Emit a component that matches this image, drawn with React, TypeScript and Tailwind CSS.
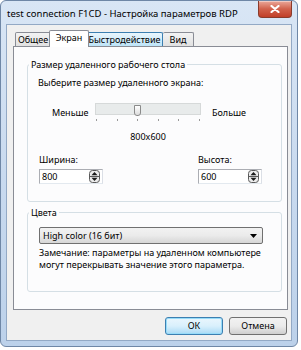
function Spinner() {
  return (
    <svg width="11" height="13" viewBox="0 0 11 13" className="shrink-0">
      <rect x="0.5" y="0.5" width="10" height="12" rx="3" fill="#ececec" stroke="#5a5a5a" />
      <path d="M5.5 2 L8.5 5.2 H2.5 Z" fill="#1a1a1a" />
      <line x1="1" y1="6.5" x2="10" y2="6.5" stroke="#5a5a5a" />
      <path d="M2.5 7.8 H8.5 L5.5 11 Z" fill="#1a1a1a" />
    </svg>
  );
}

function NumberBox({ value }: { value: string }) {
  return (
    <div className="mt-[3px] w-[64px] h-[15px] bg-white border border-[#abadb3] border-b-[#e3e9ef] border-r-[#dbdfe6] flex items-center pl-[2px] pr-[2px]">
      <span className="flex-1 leading-[13px]">{value}</span>
      <Spinner />
    </div>
  );
}

export default function App() {
  const ticks = [0, 1, 2, 3, 4, 5];
  return (
    <div className="w-[301px] h-[350px] bg-white text-black text-[9px] font-['Noto_Sans','Open_Sans',sans-serif]">
      <div className="w-[298px] h-[347px] rounded-[6px] border border-[#6f87a6] bg-gradient-to-b from-[#d9e6f5] via-[#c9daef] to-[#bcd1ea] flex flex-col">
        {/* Title bar */}
        <div className="h-[23px] flex items-start shrink-0">
          <span className="pl-[6px] pt-[6px] text-[9.5px] leading-[13px] text-black">
            test connection F1CD - Настройка параметров RDP
          </span>
          <div className="ml-auto mr-[5px] w-[34px] h-[17px] rounded-b-[4px] border border-t-0 border-[#8a3b2b] bg-gradient-to-b from-[#eaa89a] via-[#d1614b] to-[#c13e27] flex items-center justify-center shadow-[inset_0_1px_0_rgba(255,255,255,0.4)]">
            <svg width="10" height="8" viewBox="0 0 10 8">
              <path d="M1.5 1 L8.5 7 M8.5 1 L1.5 7" stroke="#ffffff" strokeWidth="2.2" strokeLinecap="round" />
            </svg>
          </div>
        </div>

        {/* Client area */}
        <div className="mx-[5px] mb-[5px] flex-1 border border-[#93a9c5] bg-[#f0f0f0] flex flex-col pl-[6px] pr-[3px] pt-[5px]">
          {/* Tabs */}
          <div className="h-[16px] flex items-end pl-[2px]">
            <div className="w-[36px] h-[14px] border border-b-0 border-[#898c95] bg-gradient-to-b from-[#f3f3f3] to-[#e1e1e1] rounded-t-[2px] flex items-center justify-center leading-[12px]">
              Общее
            </div>
            <div className="relative z-10 -mx-[2px] -mb-px w-[40px] h-[17px] border border-b-0 border-[#898c95] bg-white rounded-t-[2px] flex items-start justify-center pt-[1px] leading-[12px]">
              Экран
            </div>
            <div className="w-[76px] h-[14px] border border-b-0 border-l-0 border-[#3c7fb1] bg-gradient-to-b from-[#eaf6fd] to-[#bde4f8] rounded-t-[2px] flex items-center justify-center leading-[12px]">
              Быстродействие
            </div>
            <div className="w-[31px] h-[14px] border border-b-0 border-l-0 border-[#898c95] bg-gradient-to-b from-[#f3f3f3] to-[#e1e1e1] rounded-t-[2px] flex items-center justify-center leading-[12px]">
              Вид
            </div>
          </div>

          {/* Panel */}
          <div className="w-[275px] h-[264px] border border-[#898c95] bg-[#fcfcfd] pl-[13px] pr-[5px] pt-[11px] flex flex-col">
            {/* Group 1 */}
            <fieldset className="h-[144px] border border-[#d5dfe5] rounded-[3px] flex flex-col">
              <legend className="ml-[1px] px-[2px] leading-[13px]">Размер удаленного рабочего стола</legend>
              <div className="pl-[10px] mt-[5px] leading-[13px]">Выберите размер удаленного экрана:</div>

              <div className="mt-[14px] pl-[24px] flex items-center">
                <span className="w-[43px] leading-[13px]">Меньше</span>
                <div className="w-[106px] flex flex-col">
                  <div className="relative h-[12px] border border-[#d6d9d9] bg-[#e8ebeb]">
                    <div className="absolute left-[38px] top-[1px] w-[7px] h-[11px] rounded-b-[3px] border border-[#8a8a8a] bg-gradient-to-b from-white to-[#dcdcdc]" />
                  </div>
                  <div className="mt-[4px] h-[2px] flex justify-between px-[1px]">
                    {ticks.map((t) => (
                      <span key={t} className="w-px h-[2px] bg-[#9a9a9a]" />
                    ))}
                  </div>
                </div>
                <span className="ml-[11px] leading-[13px]">Больше</span>
              </div>

              <div className="mt-[9px] pl-[67px] flex">
                <span className="w-[106px] text-center leading-[13px]">800x600</span>
              </div>

              <div className="mt-[10px] pl-[11px] flex">
                <div className="w-[159px] flex flex-col">
                  <span className="leading-[13px]">Ширина:</span>
                  <NumberBox value="800" />
                </div>
                <div className="flex flex-col">
                  <span className="leading-[13px]">Высота:</span>
                  <NumberBox value="600" />
                </div>
              </div>
            </fieldset>

            {/* Group 2 */}
            <fieldset className="mt-[4px] h-[86px] border border-[#d5dfe5] rounded-[3px] flex flex-col">
              <legend className="ml-[1px] px-[2px] leading-[13px]">Цвета</legend>
              <div className="mt-[8px] ml-[11px] w-[224px] h-[17px] rounded-[2px] border border-[#707070] bg-gradient-to-b from-[#f2f2f2] via-[#ebebeb] to-[#d6d6d6] flex items-center pl-[3px] pr-[5px]">
                <span className="flex-1 leading-[13px]">High color (16 бит)</span>
                <svg width="7" height="4" viewBox="0 0 7 4">
                  <path d="M0 0 H7 L3.5 4 Z" fill="#000" />
                </svg>
              </div>
              <div className="mt-[3px] pl-[11px] flex flex-col leading-[12px]">
                <span>Замечание: параметры на удаленном компьютере</span>
                <span>могут перекрывать значение этого параметра.</span>
              </div>
            </fieldset>
          </div>

          {/* Buttons */}
          <div className="mt-[7px] flex justify-end gap-[6px] pr-[1px]">
            <div className="w-[58px] h-[18px] rounded-[3px] border border-[#3c7fb1] shadow-[inset_0_0_0_1px_#97dcf9] bg-gradient-to-b from-[#eaf6fd] via-[#d9f0fc] to-[#a9daf5] flex items-center justify-center leading-[12px]">
              ОК
            </div>
            <div className="w-[58px] h-[18px] rounded-[3px] border border-[#707070] bg-gradient-to-b from-[#f2f2f2] via-[#ebebeb] to-[#cfcfcf] flex items-center justify-center leading-[12px]">
              Отмена
            </div>
          </div>
        </div>
      </div>
    </div>
  );
}
